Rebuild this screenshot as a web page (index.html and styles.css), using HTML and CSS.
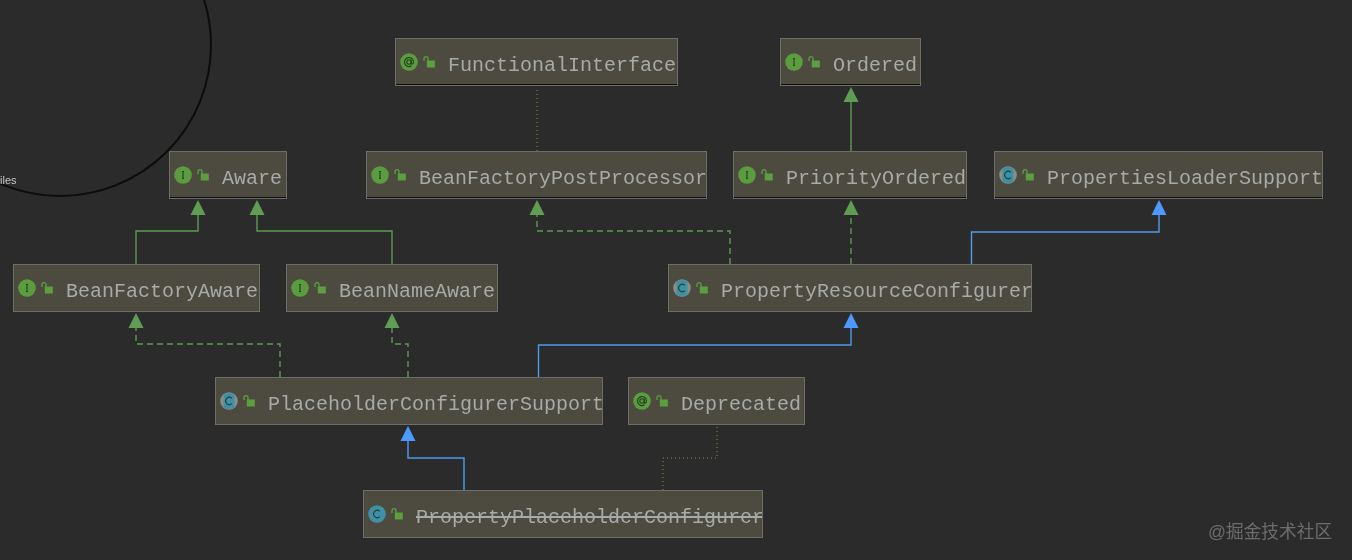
FILE: index.html
```html
<!DOCTYPE html>
<html lang="en">
<head>
<meta charset="utf-8">
<title>PropertyPlaceholderConfigurer diagram</title>
<link rel="stylesheet" href="styles.css">
</head>
<body>
<svg class="defs" width="0" height="0" aria-hidden="true">
  <defs>
    <symbol id="lock" viewBox="0 0 12 12">
      <path class="lock-body" d="M3.800 4.500h8v7h-8z"/>
      <path class="lock-arc" d="M1 5V2.600C1 1.400 1.900.7 3 .7S5 1.400 5 2.600V5"/>
    </symbol>
    <symbol id="i-interface" viewBox="0 0 18 18">
      <circle class="disc-green" cx="9" cy="9" r="8.800"/>
      <path class="mark" d="M8 5.500h2M9 5.500v7M8 12.500h2"/>
    </symbol>
    <symbol id="i-annotation" viewBox="0 0 18 18">
      <circle class="disc-green" cx="9" cy="9" r="8.800"/>
      <circle class="mark" cx="9" cy="9" r="2.200"/>
      <path class="mark" d="M11.200 6.800v3.400c0 1.400 2.300 1.200 2.300-1.200a4.500 4.500 0 1 0-2 3.800"/>
    </symbol>
    <symbol id="i-abstract" viewBox="0 0 18 18">
      <circle class="disc-grey" cx="9" cy="9" r="8.800"/>
      <path class="disc-blue" d="M3.500 2.500q5.500-3 11 0v13q-5.500 3-11 0z"/>
      <path class="mark" d="M11.800 6.400a3.600 3.600 0 1 0 0 5.200"/>
    </symbol>
    <symbol id="i-class" viewBox="0 0 18 18">
      <circle class="disc-blue" cx="9" cy="9" r="8.800"/>
      <path class="mark" d="M11.800 6.400a3.600 3.600 0 1 0 0 5.200"/>
    </symbol>
  </defs>
</svg>

<main class="canvas">
  <svg class="ring" width="1352" height="560" aria-hidden="true">
    <circle class="ring-line" cx="60" cy="45" r="151"/>
  </svg>
  <span class="ring-label">iles</span>

  <svg class="edges" width="1352" height="560" aria-hidden="true">
    <polyline class="edge dotted" points="537,90 537,151"/>
    <polyline class="edge dotted" points="663,490 663,458 717,458 717,426"/>

    <polyline class="edge green" points="851,151 851,100"/>
    <polygon class="head-green" points="851,87 858.500,102 843.500,102"/>
    <polyline class="edge green" points="136,264 136,231 198,231 198,214"/>
    <polygon class="head-green" points="198,200 205.500,215 190.500,215"/>
    <polyline class="edge green" points="392,264 392,231 257,231 257,214"/>
    <polygon class="head-green" points="257,200 264.500,215 249.500,215"/>

    <polyline class="edge green dashed" points="730,264 730,231 537,231 537,214"/>
    <polygon class="head-green" points="537,200 544.500,215 529.500,215"/>
    <polyline class="edge green dashed" points="851,264 851,214"/>
    <polygon class="head-green" points="851,200 858.500,215 843.500,215"/>
    <polyline class="edge green dashed" points="280,377 280,344 136,344 136,327"/>
    <polygon class="head-green" points="136,313 143.500,328 128.500,328"/>
    <polyline class="edge green dashed" points="408,377 408,344 392,344 392,327"/>
    <polygon class="head-green" points="392,313 399.500,328 384.500,328"/>

    <polyline class="edge blue" points="971.500,264 971.500,232 1159,232 1159,214"/>
    <polygon class="head-blue" points="1159,200 1166.500,215 1151.500,215"/>
    <polyline class="edge blue" points="538.500,377 538.500,345 851,345 851,327"/>
    <polygon class="head-blue" points="851,313 858.500,328 843.500,328"/>
    <polyline class="edge blue" points="464,490 464,458 408,458 408,440"/>
    <polygon class="head-blue" points="408,426 415.500,441 400.500,441"/>
  </svg>

  <div class="node node-functional shaded">
    <svg class="kind"><use href="#i-annotation"/></svg><svg class="lock"><use href="#lock"/></svg>
    <span class="name">FunctionalInterface</span>
  </div>
  <div class="node node-ordered shaded">
    <svg class="kind"><use href="#i-interface"/></svg><svg class="lock"><use href="#lock"/></svg>
    <span class="name">Ordered</span>
  </div>
  <div class="node node-aware shaded">
    <svg class="kind"><use href="#i-interface"/></svg><svg class="lock"><use href="#lock"/></svg>
    <span class="name">Aware</span>
  </div>
  <div class="node node-postprocessor shaded">
    <svg class="kind"><use href="#i-interface"/></svg><svg class="lock"><use href="#lock"/></svg>
    <span class="name">BeanFactoryPostProcessor</span>
  </div>
  <div class="node node-priority shaded">
    <svg class="kind"><use href="#i-interface"/></svg><svg class="lock"><use href="#lock"/></svg>
    <span class="name">PriorityOrdered</span>
  </div>
  <div class="node node-loader shaded">
    <svg class="kind"><use href="#i-abstract"/></svg><svg class="lock"><use href="#lock"/></svg>
    <span class="name">PropertiesLoaderSupport</span>
  </div>
  <div class="node node-factoryaware">
    <svg class="kind"><use href="#i-interface"/></svg><svg class="lock"><use href="#lock"/></svg>
    <span class="name">BeanFactoryAware</span>
  </div>
  <div class="node node-nameaware">
    <svg class="kind"><use href="#i-interface"/></svg><svg class="lock"><use href="#lock"/></svg>
    <span class="name">BeanNameAware</span>
  </div>
  <div class="node node-resource">
    <svg class="kind"><use href="#i-abstract"/></svg><svg class="lock"><use href="#lock"/></svg>
    <span class="name">PropertyResourceConfigurer</span>
  </div>
  <div class="node node-support">
    <svg class="kind"><use href="#i-abstract"/></svg><svg class="lock"><use href="#lock"/></svg>
    <span class="name">PlaceholderConfigurerSupport</span>
  </div>
  <div class="node node-deprecated">
    <svg class="kind"><use href="#i-annotation"/></svg><svg class="lock"><use href="#lock"/></svg>
    <span class="name">Deprecated</span>
  </div>
  <div class="node node-placeholder">
    <svg class="kind"><use href="#i-class"/></svg><svg class="lock"><use href="#lock"/></svg>
    <span class="name struck">PropertyPlaceholderConfigurer</span>
  </div>

  <span class="watermark">@掘金技术社区</span>
</main>
</body>
</html>
```
FILE: styles.css
```css
html, body {
  margin: 0;
  padding: 0;
  background: #2b2b2b;
}
.defs { position: absolute; }
.canvas {
  position: relative;
  width: 1352px;
  height: 560px;
  overflow: hidden;
  background: #2b2b2b;
  filter: blur(0.35px);
}
.ring, .edges { position: absolute; left: 0; top: 0; }
.ring-line { fill: none; stroke: #0c0c0c; stroke-width: 2; }
.ring-label {
  position: absolute;
  left: 0;
  top: 173px;
  font: 11px/14px "Liberation Sans", sans-serif;
  color: #c4c4c4;
}
.edge { fill: none; stroke-width: 1.400; }
.green { stroke: #5e9a52; }
.blue { stroke: #4f9bf0; }
.dashed { stroke-dasharray: 6 4; }
.dotted { stroke: #7d9a3e; stroke-width: 1; stroke-dasharray: 1 3; }
.head-green { fill: #5f9e52; }
.head-blue { fill: #4c9aff; }

.node {
  position: absolute;
  box-sizing: border-box;
  height: 48px;
  display: flex;
  align-items: center;
  padding-left: 4px;
  overflow: hidden;
  border: 1px solid #6e6e68;
  background: #4d4b40;
}
.shaded { box-shadow: inset 0 -1px 0 #0e0e0e; }
.kind { width: 18px; height: 18px; flex: none; }
.lock { width: 12px; height: 12px; flex: none; margin-left: 5px; }
.name {
  margin-left: 13px;
  padding-top: 7px;
  white-space: nowrap;
  font: 20px/24px "Liberation Mono", monospace;
  color: #a6aaa8;
}
.struck { text-decoration: line-through; }

.lock-body { fill: #5c9f3e; }
.lock-arc { fill: none; stroke: #5c9f3e; stroke-width: 1.300; }
.disc-green { fill: #5a9c3e; }
.disc-blue { fill: #3e8fa8; }
.disc-grey { fill: #8d8d88; }
.mark { fill: none; stroke: #24401f; stroke-width: 1.100; }

.node-functional { left: 395px; top: 38px; width: 283px; }
.node-ordered { left: 780px; top: 38px; width: 141px; }
.node-aware { left: 169px; top: 151px; width: 118px; }
.node-postprocessor { left: 366px; top: 151px; width: 341px; }
.node-priority { left: 733px; top: 151px; width: 234px; }
.node-loader { left: 994px; top: 151px; width: 329px; }
.node-factoryaware { left: 13px; top: 264px; width: 247px; }
.node-nameaware { left: 286px; top: 264px; width: 212px; }
.node-resource { left: 668px; top: 264px; width: 364px; }
.node-support { left: 215px; top: 377px; width: 388px; }
.node-deprecated { left: 628px; top: 377px; width: 177px; }
.node-placeholder { left: 363px; top: 490px; width: 400px; }

.watermark {
  position: absolute;
  left: 1208px;
  top: 520px;
  font: 17.700px/24px "Liberation Sans", "Noto Sans CJK SC", sans-serif;
  color: #6c6c6c;
}
```
